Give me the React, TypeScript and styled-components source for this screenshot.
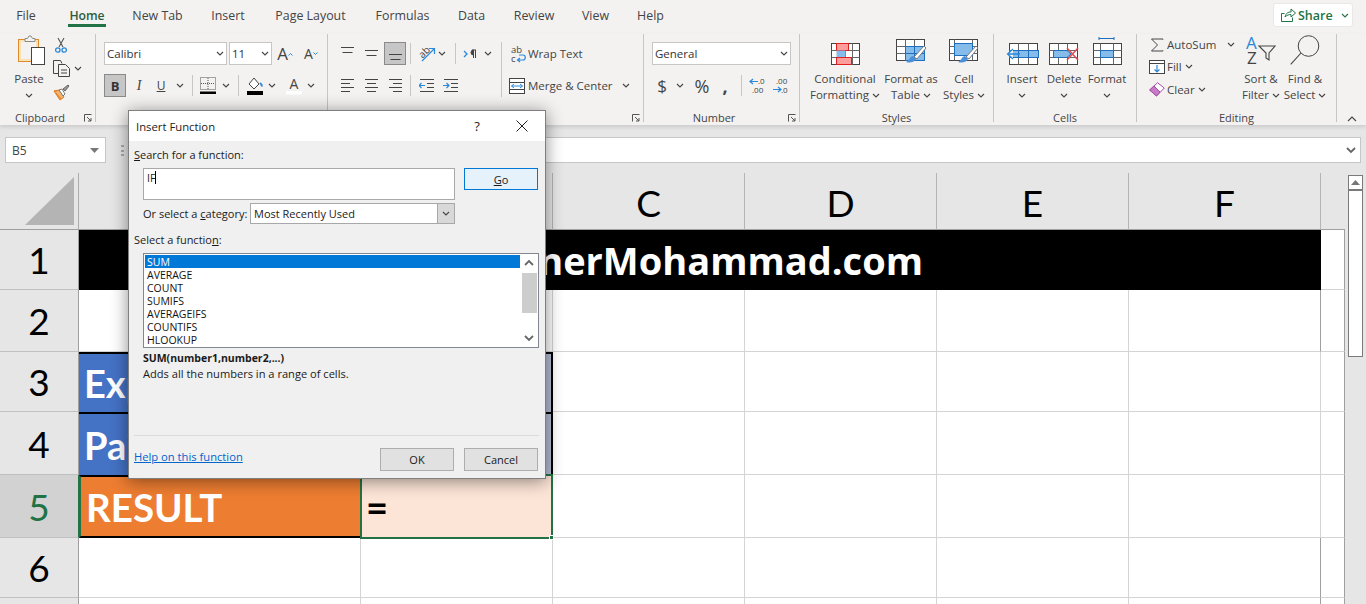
import React from "react";
import styled, { createGlobalStyle } from "styled-components";

const Global = createGlobalStyle`
  html, body { margin: 0; padding: 0; background: #e6e6e6; }
  * { box-sizing: border-box; }
`;

const ink = "#444444";
const blue = "#2b88d8";

const App0 = styled.div`
  position: relative; width: 1366px; height: 604px; overflow: hidden;
  display: flex; flex-direction: column;
  font-family: "Open Sans", "Noto Sans", sans-serif; font-size: 11.5px; color: #3b3a39;
  background: #e6e6e6;
`;
const TabBar = styled.div`display: flex; height: 34px; flex: none; background: #f3f2f1;`;
const Tab = styled.div<{ $w: number }>`
  width: ${p => p.$w}px; padding-top: 7px; display: flex; justify-content: center;
  font-size: 12.4px; line-height: 17px; color: #444;
`;
const ActiveLabel = styled.span`
  display: block; width: 38px; height: 20px; text-align: center; border-bottom: 3px solid #217346;
  color: #2b5d42; font-weight: 600; font-size: 12.2px;
`;
const Share = styled.div`
  margin: 3px 13px 0 auto; width: 80px; height: 24px; background: #fff; border: 1px solid #e9e8e7; border-radius: 3px;
  display: flex; align-items: center; padding-left: 7px; color: #217346; font-size: 12.5px; font-weight: 600;
`;
const ShareText = styled.span`width: 43px; margin-left: 2px;`;

const Ribbon = styled.div`
  display: flex; height: 91px; flex: none; background: #f3f2f1; box-shadow: 0 2px 4px rgba(0,0,0,.12); position: relative;
`;
const Group = styled.div<{ $w: number }>`
  width: ${p => p.$w}px; height: 88px; border-right: 1px solid #c8c6c4; display: flex; flex-direction: column; flex: none;
`;
const GroupBody = styled.div<{ $pl?: number; $pt?: number; $col?: boolean }>`
  height: 72px; flex: none; display: flex; flex-direction: ${p => (p.$col ? "column" : "row")};
  padding-left: ${p => p.$pl ?? 0}px; padding-top: ${p => p.$pt ?? 0}px;
`;
const GroupFoot = styled.div`display: flex; align-items: center; height: 14px; flex: none; margin-top: 5px;`;
const GroupLabel = styled.div`flex: 1; text-align: center; font-size: 11px; line-height: 14px; color: #444;`;
const LauncherBox = styled.div`width: 15px; display: flex; justify-content: center;`;
const ToolRow = styled.div<{ $mt?: number }>`display: flex; align-items: center; height: 23px; margin-top: ${p => p.$mt ?? 0}px;`;
const Tool = styled.div<{ $w: number; $ml?: number; $active?: boolean }>`
  width: ${p => p.$w}px; height: 23px; margin-left: ${p => p.$ml ?? 0}px; flex: none;
  display: flex; align-items: center; justify-content: center; color: #444;
  ${p => p.$active ? "background:#c6c6c6;border:1px solid #8a8a8a;" : ""}
`;
const Divider = styled.div<{ $ml?: number; $h?: number }>`
  width: 1px; height: ${p => p.$h ?? 21}px; flex: none; margin-left: ${p => p.$ml ?? 0}px; background: #c8c6c4;
`;
const SelectBox = styled.div<{ $w: number; $ml?: number }>`
  width: ${p => p.$w}px; height: 23px; margin-left: ${p => p.$ml ?? 0}px; flex: none; background: #fff; border: 1px solid #c8c6c4;
  display: flex; align-items: center; justify-content: space-between; padding: 0 2px 0 2px; font-size: 11.5px; color: #333;
`;
const Big = styled.div<{ $w: number; $ml?: number }>`
  width: ${p => p.$w}px; margin-left: ${p => p.$ml ?? 0}px; flex: none; display: flex; flex-direction: column; align-items: center;
  font-size: 11.5px; line-height: 16px; color: #444; padding-top: 2px; white-space: nowrap;
`;
const BigIcon = styled.div<{ $shift?: number }>`height: 35px; display: flex; align-items: flex-end; padding-bottom: 6px; margin-left: ${p => p.$shift ?? 0}px;`;
const CaretLine = styled.div`display: flex; align-items: center; justify-content: center; gap: 3px; height: 16px;`;
const Col = styled.div<{ $w?: number }>`display: flex; flex-direction: column; ${p => (p.$w ? `width:${p.$w}px;flex:none;` : "")}`;
const SmallCmd = styled.div<{ $h?: number; $mt?: number }>`
  display: flex; align-items: center; height: ${p => p.$h ?? 23}px; margin-top: ${p => p.$mt ?? 0}px; white-space: nowrap; color: #444; font-size: 11.5px;
`;
const CmdIcon = styled.div<{ $w: number; $pr?: number }>`
  width: ${p => p.$w}px; flex: none; display: flex; justify-content: ${p => (p.$pr !== undefined ? "flex-end" : "center")};
  padding-right: ${p => p.$pr ?? 0}px;
`;
const CmdChev = styled.div<{ $ml: number }>`margin-left: ${p => p.$ml}px; display: flex;`;
const Glyph = styled.span<{ $size: number; $weight?: number }>`
  font-size: ${p => p.$size}px; font-weight: ${p => p.$weight ?? 400}; line-height: 1; color: #444;
  font-family: "Liberation Serif", serif;
`;
const Letter = styled.span<{ $size: number }>`font-size: ${p => p.$size}px; line-height: 1; color: #444; font-family: "Open Sans", sans-serif;`;
const BoldB = styled.span`font-weight: 700; font-size: 13px; color: #333;`;
const Collapse = styled.div`flex: 1; display: flex; align-items: flex-end; justify-content: center; height: 88px;`;

const FormulaBar = styled.div`
  height: 42px; flex: none; padding: 12px 5px 0 5px; display: flex; background: #e6e6e6;
`;
const NameBox = styled.div`
  width: 101px; height: 26px; background: #fff; border: 1px solid #c6c6c6; display: flex; align-items: center;
  justify-content: space-between; padding: 0 6px; font-size: 12px; color: #444; flex: none;
`;
const Dots = styled.div`width: 3px; margin: 8px 0 0 15px; height: 11px; flex: none; border-top: 2px solid #aaa; border-bottom: 2px solid #aaa;
  &::after { content: ""; display: block; height: 2px; background: #aaa; margin-top: 2.5px; }
`;
const FormulaInput = styled.div`
  flex: 1; margin-left: 20px; height: 26px; background: #fff; border: 1px solid #c6c6c6; display: flex; align-items: center; justify-content: flex-end; padding-right: 4px;
`;

const SheetArea = styled.div`display: flex; flex: 1; min-height: 0; overflow: hidden;`;
const Sheet = styled.div`
  width: 1345px; padding-top: 6px; display: grid; flex: none; align-content: start;
  grid-template-columns: 79px 282px repeat(5, 192px) 24px;
  grid-template-rows: 57px 60px 62px 60px 63px 63px 60px 60px;
  font-family: Lato, "Open Sans", sans-serif; color: #000;
`;
const Corner = styled.div`
  border-right: 1px solid #ababab; border-bottom: 1px solid #9f9f9f; background: #e6e6e6; display: flex; justify-content: flex-end; align-items: flex-end; padding: 0 3px 3px 0;
`;
const ColHead = styled.div`
  background: #e6e6e6; border-right: 1px solid #b5b5b5; border-bottom: 1px solid #9f9f9f;
  display: flex; align-items: center; justify-content: center; font-size: 37px; padding-top: 2px;
`;
const HeadFill = styled.div`border-bottom: 1px solid #9f9f9f; background: #e6e6e6;`;
const RowHead = styled.div<{ $on?: boolean }>`
  background: ${p => (p.$on ? "#d2d2d2" : "#e6e6e6")}; color: ${p => (p.$on ? "#217346" : "#000")};
  border-right: 1px solid ${p => (p.$on ? "#217346" : "#9f9f9f")}; border-bottom: 1px solid #c0c0c0;
  display: flex; align-items: center; justify-content: center; font-size: 37px;
`;
const Cell = styled.div<{ $end?: boolean }>`
  background: #fff; border-right: 1px solid ${p => (p.$end ? "#9f9f9f" : "#d4d4d4")}; border-bottom: 1px solid #d4d4d4;
`;
const TitleCell = styled.div`
  grid-column: 2 / 8; background: #000; color: #fff; display: flex; align-items: center; justify-content: flex-end; padding-right: 398px;
  font-family: "Open Sans", sans-serif; font-weight: 700; font-size: 38px; white-space: nowrap;
`;
const Label = styled.div<{ $bg: string }>`
  background: ${p => p.$bg}; color: #fff; font-weight: 700; font-size: 38px; display: flex; align-items: center; padding-left: 5px;
  border: 2px solid #000; border-width: 2px 0 0 0;
`;
const ResultLabel = styled(Label)`border-width: 2px 0 2px 0; border-left: 2px solid #217346; padding-left: 5px; font-size: 38.5px;`;
const Value = styled.div`
  background: #b4bcd4; border: 2px solid #000; border-width: 2px 2px 0 2px;
`;
const ActiveCell = styled.div`
  position: relative; z-index: 1; margin: -1px 0 -1px -1px; background: #fce4d6; border: 2px solid #217346; font-size: 38px; font-weight: 700; color: #000;
  display: flex; align-items: center; padding-left: 4px;
`;
const Handle = styled.div`
  position: absolute; right: -3px; bottom: -3px; width: 5px; height: 5px; background: #217346; border: 1px solid #fff;
`;
const Gutter = styled.div`width: 21px; padding: 8px 0 0 3px; background: #e6e6e6;`;
const ScrollBar = styled.div`width: 15px; height: 182px; background: #fff; border: 1px solid #7a7a7a; display: flex; flex-direction: column;`;
const ScrollUp = styled.div`height: 15px; border-bottom: 2px solid #7a7a7a; display: flex; align-items: center; justify-content: center;`;

const Dialog = styled.div`
  position: absolute; z-index: 2; left: 128px; top: 110px; width: 418px; height: 369px; display: flex; flex-direction: column;
  border: 1px solid #7f7f7f; background: #f0f0f0; box-shadow: 0 2px 16px rgba(0,0,0,.45);
  font-size: 11px; color: #1a1a1a;
`;
const DialogTitle = styled.div`
  height: 30px; flex: none; background: #fff; display: flex; align-items: center; padding-left: 7px; font-size: 11.3px; color: #222;
`;
const TitleText = styled.span`flex: 1;`;
const Help = styled.span`width: 44px; text-align: center; font-size: 13px;`;
const Close = styled.div`width: 46px; display: flex; justify-content: center;`;
const DialogBody = styled.div`flex: 1; display: flex; flex-direction: column; padding: 6px 7px 7px 5px;`;
const DLabel = styled.div<{ $mt?: number }>`height: 16px; line-height: 16px; margin-top: ${p => p.$mt ?? 0}px; white-space: nowrap;`;
const SearchRow = styled.div`display: flex; gap: 9px; margin: 5px 0 0 9px; align-items: flex-start;`;
const SearchInput = styled.div`
  width: 312px; height: 32px; background: #fff; border: 1px solid #a8a8a8; padding: 2px 3px; line-height: 14px; font-size: 10.5px;
  display: flex; align-items: flex-start;
`;
const TextCaret = styled.span`display: inline-block; width: 1px; height: 13px; background: #000;`;
const DButton = styled.div<{ $primary?: boolean }>`
  width: 74px; height: ${p => (p.$primary ? 22 : 23)}px; display: flex; align-items: center; justify-content: center; flex: none;
  background: ${p => (p.$primary ? "#e5f1fb" : "#e1e1e1")}; border: 1px solid ${p => (p.$primary ? "#0078d7" : "#adadad")};
`;
const CategoryRow = styled.div`display: flex; align-items: center; margin: 3px 0 0 9px; height: 21px;`;
const CategoryLabel = styled.div`width: 107px; flex: none; white-space: nowrap;`;
const CategorySelect = styled.div`
  width: 205px; height: 21px; display: flex; align-items: stretch; background: #fff; border: 1px solid #a8a8a8; padding-left: 3px; line-height: 19px;
`;
const CategoryText = styled.span`flex: 1;`;
const CategoryArrow = styled.div`width: 17px; background: #d8d8d8; border-left: 1px solid #a8a8a8; display: flex; align-items: center; justify-content: center;`;
const ListBox = styled.div`
  margin: 5px 0 0 9px; width: 396px; height: 95px; border: 1px solid #828790; background: #fff; display: flex; padding: 1px; font-size: 10.5px;
`;
const ListRows = styled.div`width: 375px; flex: none;`;
const ListRow = styled.div<{ $on?: boolean }>`
  height: 13px; line-height: 15px; padding-left: 2px; background: ${p => (p.$on ? "#0078d7" : "transparent")}; color: ${p => (p.$on ? "#fff" : "#111")};
`;
const ListScroll = styled.div`flex: 1; margin-left: 1px; display: flex; flex-direction: column; align-items: center; padding-top: 4px;`;
const Thumb = styled.div`width: 15px; height: 40px; background: #cdcdcd; margin: 4px 0 22px;`;
const ScrollGap = styled.div`height: 3px;`;
const Signature = styled.div`margin: 2px 0 0 9px; height: 16px; line-height: 16px; font-weight: 700; font-size: 10.5px;`;
const Desc = styled.div`margin-left: 9px; height: 16px; line-height: 16px; font-size: 11.1px;`;
const Rule = styled.div`margin-top: auto; height: 1px; background: #dadada; width: 405px; flex: none;`;
const DialogFoot = styled.div`display: flex; align-items: center; margin-top: 12px; height: 23px; gap: 10px; flex: none;`;
const HelpLink = styled.a`flex: 1; color: #0066cc; text-decoration: underline; margin-top: -6px; font-size: 11.2px;`;

/* ---------- icons ---------- */
const Chev = ({ c = ink }: { c?: string }) => (
  <svg width="8" height="5" viewBox="0 0 8 5"><polyline points="1,1 4,4 7,1" fill="none" stroke={c} strokeWidth="1.1" /></svg>
);
const Launcher = () => (
  <svg width="8" height="8" viewBox="0 0 8 8"><path d="M.5 7.5V.5h7M3 3l4 4M7 4v3H4" fill="none" stroke="#555" /></svg>
);
const PasteIcon = () => (
  <svg width="28" height="30" viewBox="0 0 28 30">
    <rect x=".5" y="4.500" width="20" height="22" fill="#fbe2b4" stroke="#e08a2e" />
    <rect x="3" y="7" width="15" height="17" fill="#f3f2f1" />
    <path d="M7 6.500V3.500h2.500L11 1h2l1.500 2.500H17v3z" fill="#f3f2f1" stroke="#8a8a8a" />
    <rect x="13.500" y="12.500" width="13" height="17" fill="#fff" stroke="#444" />
  </svg>
);
const Scissors = () => (
  <svg width="12" height="16" viewBox="0 0 12 16">
    <path d="M3 1l5 9M9 1L4 10" stroke="#555" strokeWidth="1.100" fill="none" />
    <circle cx="2.800" cy="13" r="2.200" fill="none" stroke={blue} strokeWidth="1.300" />
    <circle cx="9.200" cy="13" r="2.200" fill="none" stroke={blue} strokeWidth="1.300" />
  </svg>
);
const CopyIcon = () => (
  <svg width="17" height="17" viewBox="0 0 17 17">
    <path d="M5.500 13.500H.5V.5h7l1.500 3" fill="none" stroke="#444" />
    <path d="M5.500 4.500h7l4 4v8h-11z" fill="#f3f2f1" stroke="#444" />
    <path d="M8 10h6M8 13h6" stroke="#444" />
  </svg>
);
const PainterIcon = () => (
  <svg width="17" height="17" viewBox="0 0 17 17">
    <path d="M1 7l6 9 4-3-5-7z" fill="#f7b56c" stroke="#e07b20" />
    <path d="M6 6l4 6 2-2-3-5z" fill="#fff" stroke="#777" />
    <path d="M10 5l5-4 1 1-4 5z" fill="#999" stroke="#666" />
    <path d="M3 9l5 6M1 7l3 0" stroke="#e07b20" />
  </svg>
);
const BorderIcon = () => (
  <svg width="16" height="18" viewBox="0 0 16 18">
    <rect x=".5" y=".5" width="15" height="12" fill="none" stroke="#555" strokeDasharray="1 1" />
    <path d="M8 1v12M1 6.500h14" stroke="#555" strokeDasharray="1 1" />
    <rect y="14.500" width="16" height="2.500" fill="#000" />
  </svg>
);
const FillIcon = () => (
  <svg width="17" height="18" viewBox="0 0 17 18">
    <path d="M7 1L2 7l5 5 5-5z" fill="#fff" stroke="#444" />
    <path d="M13 6c1.500 1 2 2 2 3.500" stroke={blue} strokeWidth="2" fill="none" />
    <rect y="14" width="16" height="4" fill="#000" />
  </svg>
);
const FontColorIcon = () => (
  <svg width="16" height="18" viewBox="0 0 16 18">
    <text x="8" y="12" textAnchor="middle" fontSize="14" fontFamily="Open Sans" fill="#444">A</text>
    <rect y="14" width="16" height="3.500" fill="#fff" />
  </svg>
);
const VAlign = ({ dy }: { dy: number }) => (
  <svg width="15" height="17" viewBox="0 0 15 17">
    <path d={`M1 ${dy + 0.5}h13M2.500 ${dy + 5.5}h10`} stroke="#444" fill="none" />
  </svg>
);
const HAlign = ({ rows }: { rows: [number, number][] }) => (
  <svg width="15" height="15" viewBox="0 0 15 15">
    <path d={rows.map(([a, b], i) => `M${a} ${1.5 + i * 4}h${b - a}`).join("")} stroke="#444" fill="none" />
  </svg>
);
const Orientation = () => (
  <svg width="18" height="18" viewBox="0 0 18 18">
    <text x="1" y="11" fontSize="10" transform="rotate(-45 6 8)" fontFamily="Open Sans" fill="#444">ab</text>
    <path d="M4 16L16 4M11 3.500h5.500V9" stroke={blue} strokeWidth="1.200" fill="none" />
  </svg>
);
const RtlIcon = () => (
  <svg width="14" height="10" viewBox="0 0 14 10">
    <path d="M1 2l3 3-3 3" stroke={blue} strokeWidth="1.300" fill="none" />
    <path d="M9 1h4M10.500 1v8M12.500 1v8M10.500 1a2.400 2.400 0 0 0 0 5" stroke="#444" fill="#444" />
  </svg>
);
const IndentIcon = ({ inc }: { inc?: boolean }) => (
  <svg width="15" height="13" viewBox="0 0 15 13">
    <path d="M1 .5h14M8 4.500h7M8 8.500h7M1 12.500h14" stroke="#444" fill="none" />
    <path d={inc ? "M0 6.500h6M3.500 4L6 6.500 3.500 9" : "M6 6.500H0M2.500 4L0 6.500 2.500 9"} stroke={blue} strokeWidth="1.200" fill="none" />
  </svg>
);
const WrapIcon = () => (
  <svg width="16" height="18" viewBox="0 0 16 18">
    <text x="0" y="8" fontSize="9.500" fontFamily="Open Sans" fill="#444">ab</text>
    <text x="0" y="17" fontSize="9.500" fontFamily="Open Sans" fill="#444">c</text>
    <path d="M7 15h5c3 0 3-5 0-5H8M9 13l-2.500 2L9 17" stroke={blue} strokeWidth="1.200" fill="none" />
  </svg>
);
const MergeIcon = () => (
  <svg width="16" height="16" viewBox="0 0 16 16">
    <rect x=".5" y=".5" width="15" height="15" fill="#fff" stroke="#444" />
    <path d="M1 4.500h14M1 11.500h14" stroke="#444" />
    <path d="M2.500 8h11M5 6L2.500 8 5 10M11 6l2.500 2L11 10" stroke={blue} fill="none" />
  </svg>
);
const DecIcon = ({ inc }: { inc?: boolean }) => (
  <svg width="17" height="17" viewBox="0 0 17 17">
    {inc ? (
      <>
        <text x="3" y="7" fontSize="8" fontFamily="Open Sans" fill="#444">.00</text>
        <text x="8" y="16" fontSize="8" fontFamily="Open Sans" fill="#444">.0</text>
        <path d="M0 12.500h8M5 10l3 2.500L5 15" stroke={blue} strokeWidth="1.200" fill="none" />
      </>
    ) : (
      <>
        <text x="9" y="7" fontSize="8" fontFamily="Open Sans" fill="#444">.0</text>
        <text x="3" y="16" fontSize="8" fontFamily="Open Sans" fill="#444">.00</text>
        <path d="M9 4.500H1M4 2L1 4.500 4 7" stroke={blue} strokeWidth="1.200" fill="none" />
      </>
    )}
  </svg>
);
const grid = "M.5 7.500h28M.5 14.500h28M7.500 .5v21M14.500 .5v21M21.500 .5v21";
const Conditional = () => (
  <svg width="29" height="22" viewBox="0 0 29 22">
    <rect x=".5" y=".5" width="28" height="21" fill="#fff" stroke="#444" />
    <path d={grid} stroke="#666" fill="none" />
    <rect x="5.500" y=".5" width="12" height="7" fill="#ff9d9d" stroke="#e02020" />
    <rect x="5.500" y="7.500" width="9" height="7" fill="#85bcea" />
    <rect x="5.500" y="14.500" width="15" height="7" fill="#ff9d9d" stroke="#e02020" />
  </svg>
);
const Brush = ({ x, y }: { x: number; y: number }) => (
  <g transform={`translate(${x} ${y})`}>
    <path d="M9 11L19 0l2 2-9 11z" fill="#fff" stroke="#777" />
    <path d="M1 16c3 1 8 1 10-3l-3-3c-3 0-3 4-7 6z" fill="#4a90d9" />
  </g>
);
const TableStyle = () => (
  <svg width="31" height="26" viewBox="0 0 31 26">
    <rect x=".5" y=".5" width="28" height="21" fill="#fff" stroke="#444" />
    <path d="M.5 7.500h28M.5 14.500h28M9.500 .5v21M18.500 .5v21" stroke="#666" fill="none" />
    <rect x="9.500" y="7.500" width="19" height="14" fill="#85bcea" stroke="#1f6fbf" />
    <path d="M9.500 14.500h19M18.500 7.500v14" stroke="#1f6fbf" />
    <Brush x={9} y={7} />
  </svg>
);
const CellStyle = () => (
  <svg width="31" height="26" viewBox="0 0 31 26">
    <rect x=".5" y=".5" width="28" height="21" fill="#fff" stroke="#444" />
    <path d="M.5 7.500h28M.5 14.500h28M5.500 .5v21M23.500 .5v21" stroke="#666" fill="none" />
    <rect x="5.500" y="4.500" width="18" height="12" fill="#85bcea" stroke="#1f6fbf" />
    <Brush x={8} y={7} />
  </svg>
);
const InsertIcon = () => (
  <svg width="33" height="22" viewBox="0 0 33 22">
    <rect x="3.500" y=".5" width="28" height="21" fill="#fff" stroke="#444" />
    <path d="M3.500 7.500h28M3.500 14.500h28M12.500 .5v21M22.500 .5v21" stroke="#666" fill="none" />
    <rect x="3.500" y="7.500" width="29" height="7" fill="#85bcea" stroke="#1f6fbf" />
    <path d="M12.500 7.500v7M22.500 7.500v7" stroke="#1f6fbf" />
    <path d="M14 11H2M7 6l-5.500 5L7 16" stroke={blue} strokeWidth="1.300" fill="#f3f2f1" />
  </svg>
);
const DeleteIcon = () => (
  <svg width="30" height="22" viewBox="0 0 30 22">
    <rect x=".5" y=".5" width="28" height="21" fill="#fff" stroke="#444" />
    <path d="M.5 7.500h28M.5 14.500h28M9.500 .5v21M18.500 .5v21" stroke="#666" fill="none" />
    <path d="M4.500 7.500H18l4 3.500-4 3.500H4.500z" fill="#85bcea" stroke="#1f6fbf" />
    <path d="M18 5l11 12M29 5L18 17" stroke="#e8494c" strokeWidth="1.500" />
  </svg>
);
const FormatIcon = () => (
  <svg width="29" height="28" viewBox="0 0 29 28">
    <path d="M6 1.500h15M6 0v3M21 0v3" stroke="#1f6fbf" />
    <rect x=".5" y="6.500" width="28" height="21" fill="#fff" stroke="#444" />
    <path d="M.5 13.500h28M.5 20.500h28M7.500 6.500v21M20.500 6.500v21" stroke="#666" fill="none" />
    <rect x="7.500" y="13.500" width="13" height="7" fill="#85bcea" stroke="#1f6fbf" />
  </svg>
);
const SigmaIcon = () => (
  <svg width="14" height="14" viewBox="0 0 14 14"><path d="M13 1.500V1H1.500l6 6-6 6H13v-.5" fill="none" stroke="#444" /></svg>
);
const FillDown = () => (
  <svg width="16" height="14" viewBox="0 0 16 14">
    <rect x=".5" y=".5" width="15" height="13" fill="#fff" stroke="#444" />
    <path d="M.5 3.500h15" stroke="#444" />
    <path d="M8 5v7M5.500 9.500L8 12l2.500-2.500" stroke={blue} strokeWidth="1.200" fill="none" />
  </svg>
);
const Eraser = () => (
  <svg width="16" height="15" viewBox="0 0 16 15">
    <path d="M0.700 8L8.500.7 15.300 6 7.500 14z" fill="#fff" stroke="#a64ca6" />
    <path d="M0.700 8L5 4l6 6-3.500 4z" fill="#c77bc7" stroke="#a64ca6" />
  </svg>
);
const SortIcon = () => (
  <svg width="30" height="28" viewBox="0 0 30 28">
    <text x="0" y="12" fontSize="17" fontFamily="Open Sans" fill={blue}>A</text>
    <text x="1" y="27" fontSize="17" fontFamily="Open Sans" fill="#444">Z</text>
    <path d="M13 9h16l-6 7v7l-3-2v-5z" fill="none" stroke="#444" strokeWidth="1.100" />
  </svg>
);
const FindIcon = () => (
  <svg width="30" height="30" viewBox="0 0 30 30">
    <circle cx="18.500" cy="11" r="10.300" fill="#f3f2f1" stroke="#444" />
    <path d="M11 18L.7 29.300" stroke="#444" strokeWidth="1.100" />
  </svg>
);
const ShareIcon = () => (
  <svg width="15" height="14" viewBox="0 0 15 14">
    <path d="M.5 5.500v8h11v-4M.5 5.500l3 0" fill="none" stroke="#217346" />
    <path d="M4 9c1-4 3-5 6-5V1l4.500 4L10 9V6.500C8 6.500 6 7 4 9z" fill="none" stroke="#217346" />
  </svg>
);
const CornerTri = () => (
  <svg width="50" height="49" viewBox="0 0 50 49"><path d="M49 0v48H0z" fill="#b4b4b4" /></svg>
);
const Tri = ({ up }: { up?: boolean }) => (
  <svg width="9" height="5" viewBox="0 0 9 5"><path d={up ? "M4.500 0L9 5H0z" : "M0 0h9L4.500 5z"} fill="#777" /></svg>
);
const DblChev = ({ up }: { up?: boolean }) => (
  <svg width="10" height="7" viewBox="0 0 10 7"><path d={up ? "M1 6l4-4 4 4" : "M1 1l4 4 4-4"} fill="none" stroke="#666" strokeWidth="1.800" /></svg>
);
const CloseX = () => (
  <svg width="12" height="12" viewBox="0 0 12 12"><path d="M.5 .5l11 11M11.500 .5l-11 11" stroke="#222" /></svg>
);

const tabs: [string, number][] = [
  ["File", 52], ["Home", 70], ["New Tab", 71], ["Insert", 70], ["Page Layout", 95],
  ["Formulas", 89], ["Data", 49], ["Review", 76], ["View", 47], ["Help", 63],
];
const fns = ["SUM", "AVERAGE", "COUNT", "SUMIFS", "AVERAGEIFS", "COUNTIFS", "HLOOKUP"];
const cols = ["C", "D", "E", "F"];
const rowHeads = (n: number, on?: boolean) => <RowHead $on={on}>{n}</RowHead>;
const emptyCells = () => (
  <>
    <Cell /><Cell /><Cell /><Cell />
    <Cell $end />
  </>
);

const Foot = ({ label, launch }: { label: string; launch?: boolean }) => (
  <GroupFoot>
    <GroupLabel>{label}</GroupLabel>
    {launch && <LauncherBox><Launcher /></LauncherBox>}
  </GroupFoot>
);
const BigCmd = ({ w, ml, icon, l1, l2, shift }: { w: number; ml?: number; icon: React.ReactNode; l1: string; l2?: string; shift?: number }) => (
  <Big $w={w} $ml={ml}>
    <BigIcon $shift={shift}>{icon}</BigIcon>
    <div>{l1}</div>
    <CaretLine>{l2}<Chev /></CaretLine>
  </Big>
);

export default function App() {
  return (
    <App0>
      <Global />
      <TabBar>
        {tabs.map(([t, w]) => (
          <Tab key={t} $w={w}>{t === "Home" ? <ActiveLabel>{t}</ActiveLabel> : t}</Tab>
        ))}
        <Share><ShareIcon /><ShareText>Share</ShareText><Chev c="#217346" /></Share>
      </TabBar>
      <Ribbon>
        <Group $w={96}>
          <GroupBody>
            <Col $w={52}>
              <BigCmd w={58} icon={<PasteIcon />} l1="Paste" shift={5} />
            </Col>
            <Col>
              <SmallCmd $h={22}><CmdIcon $w={18}><Scissors /></CmdIcon></SmallCmd>
              <SmallCmd $h={24}><CmdIcon $w={18}><CopyIcon /></CmdIcon><CmdChev $ml={4}><Chev /></CmdChev></SmallCmd>
              <SmallCmd $h={24}><CmdIcon $w={18}><PainterIcon /></CmdIcon></SmallCmd>
            </Col>
          </GroupBody>
          <Foot label="Clipboard" launch />
        </Group>
        <Group $w={232}>
          <GroupBody $pl={8} $pt={8} $col>
            <ToolRow>
              <SelectBox $w={123}>Calibri<Chev /></SelectBox>
              <SelectBox $w={43} $ml={2}>11<Chev /></SelectBox>
              <Tool $w={20} $ml={3}><Letter $size={17}>A</Letter><svg width="5" height="4" viewBox="0 0 5 4"><path d="M.5 3.500l2-2 2 2" stroke={blue} fill="none" /></svg></Tool>
              <Tool $w={20} $ml={6}><Letter $size={14}>A</Letter><svg width="5" height="4" viewBox="0 0 5 4"><path d="M.5 .5l2 2 2-2" stroke={blue} fill="none" /></svg></Tool>
            </ToolRow>
            <ToolRow $mt={9}>
              <Tool $w={22} $active><BoldB>B</BoldB></Tool>
              <Tool $w={22} $ml={2}><Glyph $size={14}><i>I</i></Glyph></Tool>
              <Tool $w={22}><Letter $size={12}><u>U</u></Letter></Tool>
              <Tool $w={16}><Chev /></Tool>
              <Divider $ml={4} />
              <Tool $w={24} $ml={3}><BorderIcon /></Tool>
              <Tool $w={12}><Chev /></Tool>
              <Divider $ml={6} />
              <Tool $w={24} $ml={4}><FillIcon /></Tool>
              <Tool $w={10}><Chev /></Tool>
              <Tool $w={20} $ml={7}><FontColorIcon /></Tool>
              <Tool $w={14}><Chev /></Tool>
            </ToolRow>
          </GroupBody>
          <Foot label="Font" launch />
        </Group>
        <Group $w={316}>
          <GroupBody $pt={8}>
            <Col $w={173}>
              <ToolRow>
                <Tool $w={22} $ml={8}><VAlign dy={2} /></Tool>
                <Tool $w={22} $ml={2}><VAlign dy={5} /></Tool>
                <Tool $w={22} $ml={2} $active><VAlign dy={9} /></Tool>
                <Divider $ml={4} />
                <Tool $w={20} $ml={6}><Orientation /></Tool>
                <Tool $w={10}><Chev /></Tool>
                <Divider $ml={8} />
                <Tool $w={22} $ml={3}><RtlIcon /></Tool>
                <Tool $w={14}><Chev /></Tool>
              </ToolRow>
              <ToolRow $mt={9}>
                <Tool $w={22} $ml={8}><HAlign rows={[[1, 14], [1, 10], [1, 14], [1, 10]]} /></Tool>
                <Tool $w={22} $ml={2}><HAlign rows={[[1, 14], [3, 12], [1, 14], [3, 12]]} /></Tool>
                <Tool $w={22} $ml={2}><HAlign rows={[[1, 14], [5, 14], [1, 14], [5, 14]]} /></Tool>
                <Divider $ml={4} />
                <Tool $w={22} $ml={4}><IndentIcon /></Tool>
                <Tool $w={22} $ml={2}><IndentIcon inc /></Tool>
              </ToolRow>
            </Col>
            <Divider $h={55} />
            <Col>
              <SmallCmd><CmdIcon $w={26} $pr={1}><WrapIcon /></CmdIcon>Wrap Text</SmallCmd>
              <SmallCmd $mt={9}><CmdIcon $w={26} $pr={3}><MergeIcon /></CmdIcon>Merge &amp; Center<CmdChev $ml={9}><Chev /></CmdChev></SmallCmd>
            </Col>
          </GroupBody>
          <Foot label="Alignment" launch />
        </Group>
        <Group $w={156}>
          <GroupBody $pl={8} $pt={8} $col>
            <ToolRow><SelectBox $w={139}>General<Chev /></SelectBox></ToolRow>
            <ToolRow $mt={9}>
              <Tool $w={20}><Letter $size={17}>$</Letter></Tool>
              <Tool $w={16}><Chev /></Tool>
              <Tool $w={24} $ml={2}><Letter $size={18}>%</Letter></Tool>
              <Tool $w={20} $ml={1}><Letter $size={18}><b>,</b></Letter></Tool>
              <Divider $ml={6} />
              <Tool $w={22} $ml={4}><DecIcon /></Tool>
              <Tool $w={22} $ml={2}><DecIcon inc /></Tool>
            </ToolRow>
          </GroupBody>
          <Foot label="Number" launch />
        </Group>
        <Group $w={194}>
          <GroupBody $pl={14}>
            <BigCmd w={62} icon={<Conditional />} l1="Conditional" l2="Formatting" />
            <BigCmd w={54} ml={8} icon={<TableStyle />} l1="Format as" l2="Table" />
            <BigCmd w={42} ml={5} icon={<CellStyle />} l1="Cell" l2="Styles" />
          </GroupBody>
          <Foot label="Styles" />
        </Group>
        <Group $w={143}>
          <GroupBody $pl={6}>
            <BigCmd w={44} icon={<InsertIcon />} l1="Insert" />
            <BigCmd w={40} icon={<DeleteIcon />} l1="Delete" />
            <BigCmd w={46} icon={<FormatIcon />} l1="Format" />
          </GroupBody>
          <Foot label="Cells" />
        </Group>
        <Group $w={200}>
          <GroupBody $pl={10}>
            <Col $w={93}>
              <SmallCmd $h={21}><CmdIcon $w={20}><SigmaIcon /></CmdIcon>AutoSum<CmdChev $ml={11}><Chev /></CmdChev></SmallCmd>
              <SmallCmd><CmdIcon $w={20}><FillDown /></CmdIcon>Fill<CmdChev $ml={3}><Chev /></CmdChev></SmallCmd>
              <SmallCmd><CmdIcon $w={20}><Eraser /></CmdIcon>Clear<CmdChev $ml={3}><Chev /></CmdChev></SmallCmd>
            </Col>
            <BigCmd w={42} icon={<SortIcon />} l1="Sort &" l2="Filter" />
            <BigCmd w={46} icon={<FindIcon />} l1="Find &" l2="Select" />
          </GroupBody>
          <Foot label="Editing" />
        </Group>
        <Collapse>
          <svg width="10" height="6" viewBox="0 0 10 6"><polyline points="1,5 5,1 9,5" fill="none" stroke={ink} strokeWidth="1.100" /></svg>
        </Collapse>
      </Ribbon>
      <FormulaBar>
        <NameBox>B5<Tri /></NameBox>
        <Dots />
        <FormulaInput><DblChev /></FormulaInput>
      </FormulaBar>
      <SheetArea>
        <Sheet>
          <Corner><CornerTri /></Corner>
          <ColHead>A</ColHead>
          <ColHead>B</ColHead>
          {cols.map(c => <ColHead key={c}>{c}</ColHead>)}
          <HeadFill />

          {rowHeads(1)}
          <TitleCell>DesignerMohammad.com</TitleCell>
          <Cell $end />

          {rowHeads(2)}
          <Cell />{emptyCells()}<Cell $end />

          {rowHeads(3)}
          <Label $bg="#4472c4">Expense</Label>
          <Value />
          {emptyCells()}

          {rowHeads(4)}
          <Label $bg="#4472c4">Paid</Label>
          <Value />
          {emptyCells()}

          {rowHeads(5, true)}
          <ResultLabel $bg="#ed7d31">RESULT</ResultLabel>
          <ActiveCell>=<Handle /></ActiveCell>
          {emptyCells()}

          {rowHeads(6)}
          <Cell />{emptyCells()}<Cell $end />

          {rowHeads(7)}
          <Cell />{emptyCells()}<Cell $end />
        </Sheet>
        <Gutter>
          <ScrollBar><ScrollUp><Tri up /></ScrollUp></ScrollBar>
        </Gutter>
      </SheetArea>

      <Dialog>
        <DialogTitle>
          <TitleText>Insert Function</TitleText>
          <Help>?</Help>
          <Close><CloseX /></Close>
        </DialogTitle>
        <DialogBody>
          <DLabel><u>S</u>earch for a function:</DLabel>
          <SearchRow>
            <SearchInput>IF<TextCaret /></SearchInput>
            <DButton $primary><span><u>G</u>o</span></DButton>
          </SearchRow>
          <CategoryRow>
            <CategoryLabel>Or select a <u>c</u>ategory:</CategoryLabel>
            <CategorySelect>
              <CategoryText>Most Recently Used</CategoryText>
              <CategoryArrow><Chev /></CategoryArrow>
            </CategorySelect>
          </CategoryRow>
          <DLabel $mt={8}>Select a functio<u>n</u>:</DLabel>
          <ListBox>
            <ListRows>
              {fns.map((f, i) => <ListRow key={f} $on={i === 0}>{f}</ListRow>)}
            </ListRows>
            <ListScroll>
              <DblChev up />
              <ScrollGap />
              <Thumb />
              <DblChev />
            </ListScroll>
          </ListBox>
          <Signature>SUM(number1,number2,...)</Signature>
          <Desc>Adds all the numbers in a range of cells.</Desc>
          <Rule />
          <DialogFoot>
            <HelpLink>Help on this function</HelpLink>
            <DButton>OK</DButton>
            <DButton>Cancel</DButton>
          </DialogFoot>
        </DialogBody>
      </Dialog>
    </App0>
  );
}
